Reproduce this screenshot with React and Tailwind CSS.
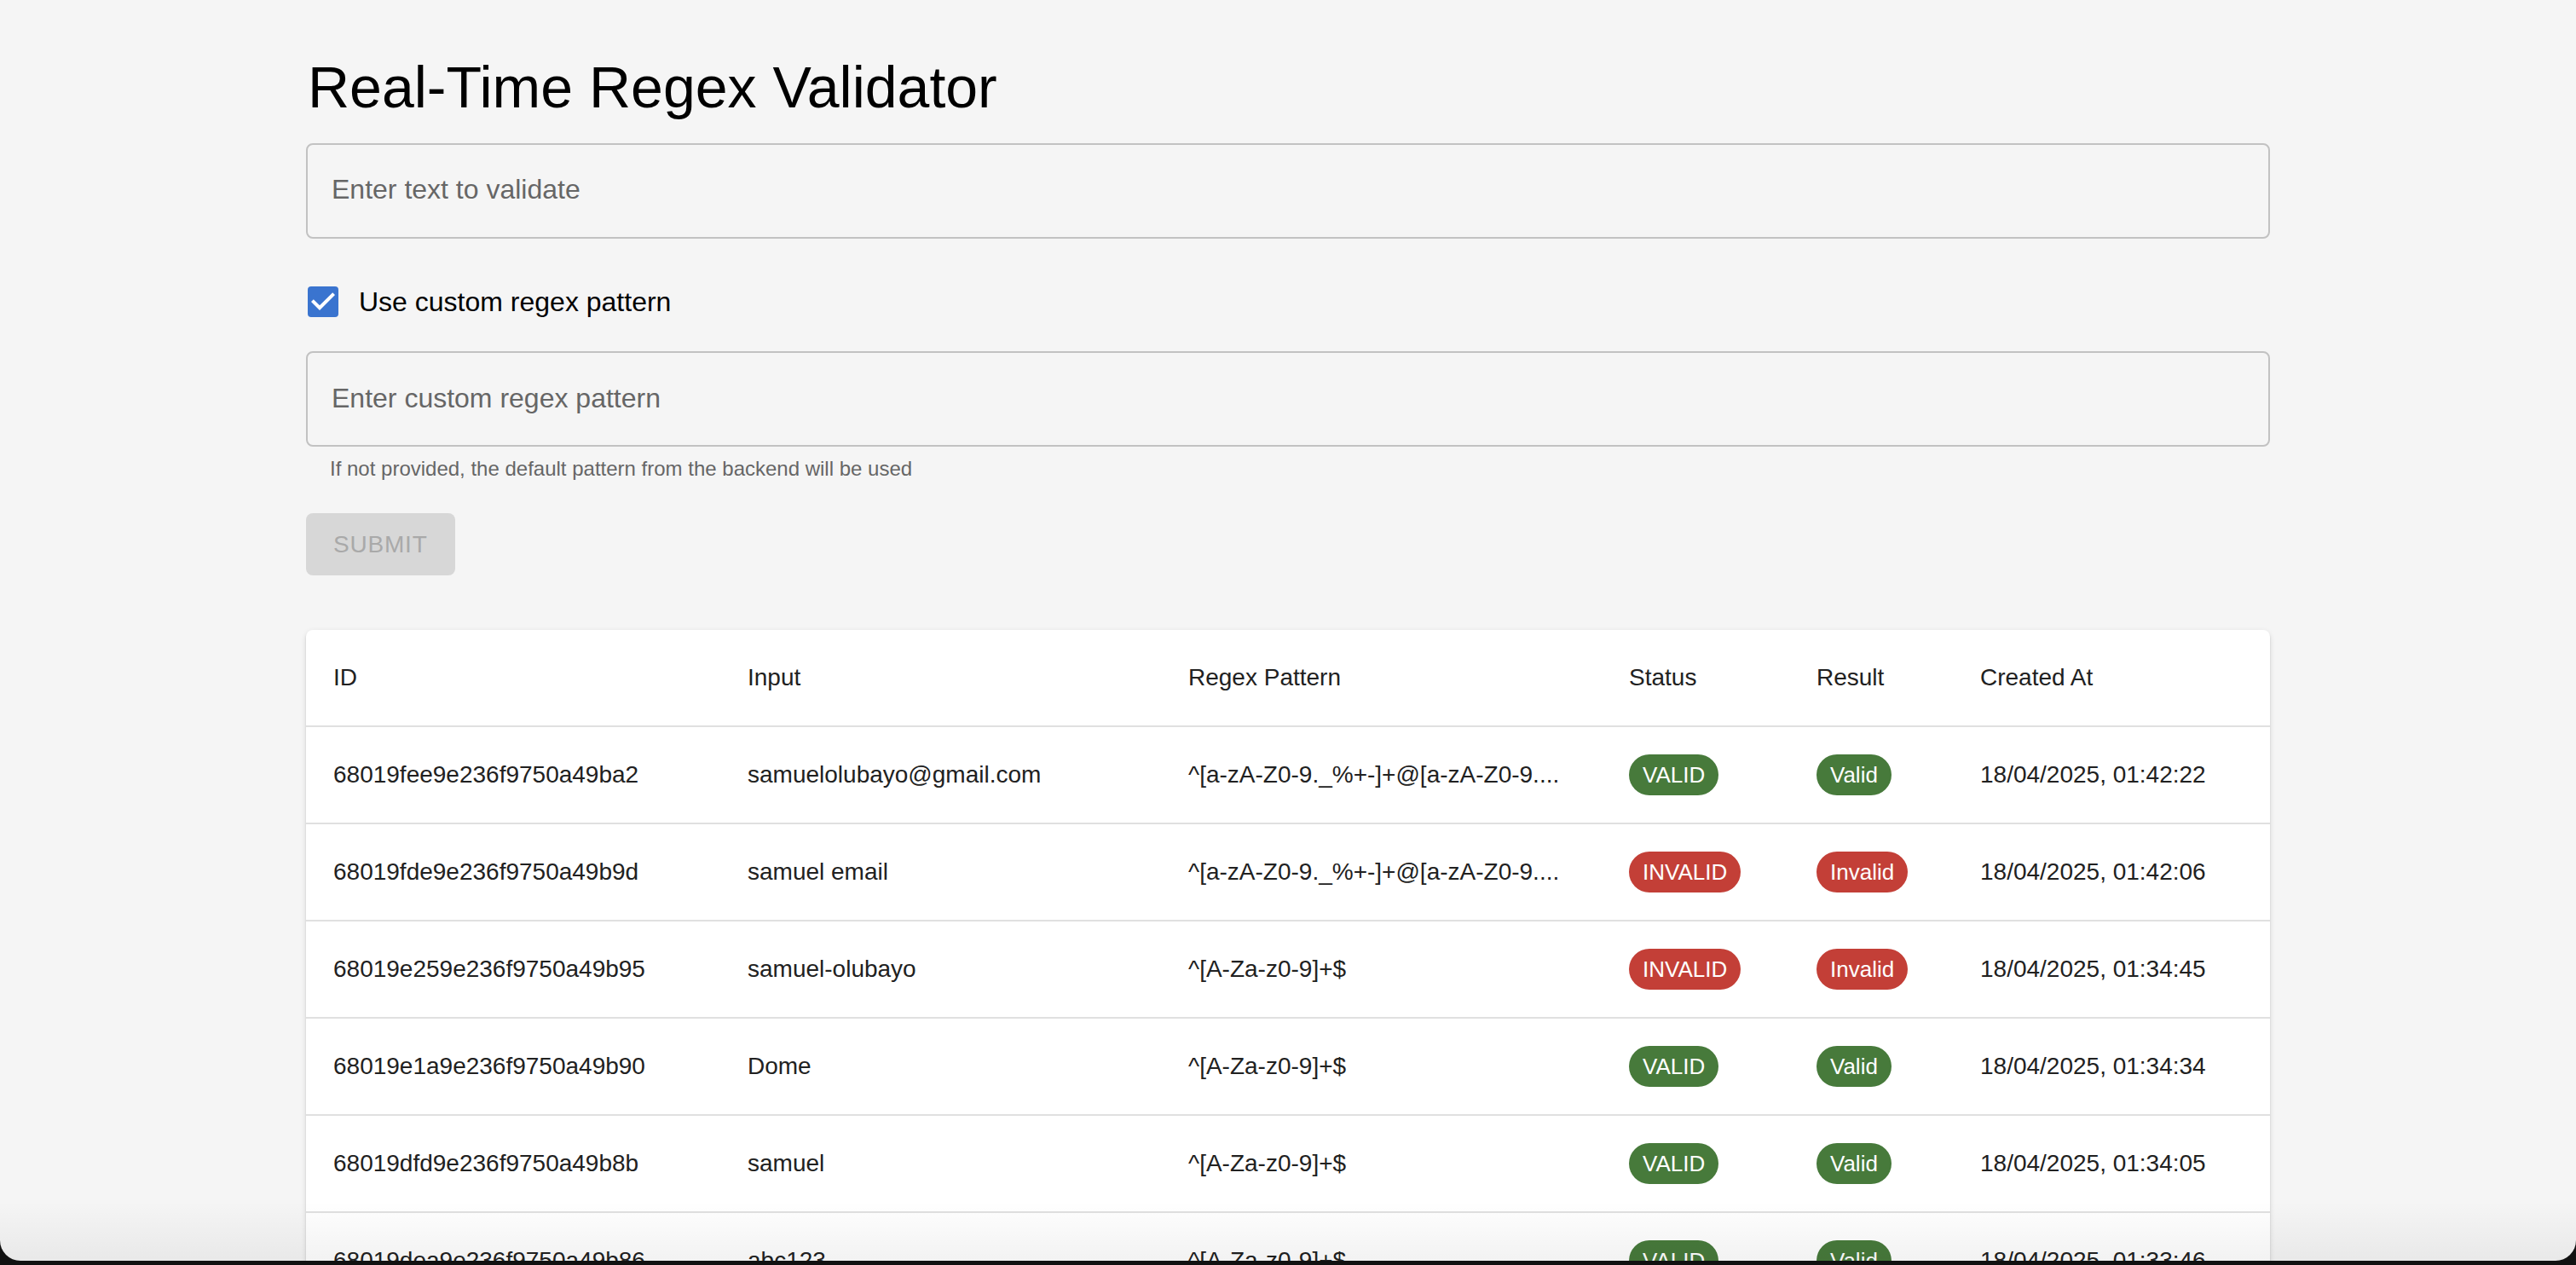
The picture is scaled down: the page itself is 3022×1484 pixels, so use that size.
import React from "react";

const rows = [
  ["68019fee9e236f9750a49ba2", "samuelolubayo@gmail.com", "^[a-zA-Z0-9._%+-]+@[a-zA-Z0-9....", true, "18/04/2025, 01:42:22"],
  ["68019fde9e236f9750a49b9d", "samuel email", "^[a-zA-Z0-9._%+-]+@[a-zA-Z0-9....", false, "18/04/2025, 01:42:06"],
  ["68019e259e236f9750a49b95", "samuel-olubayo", "^[A-Za-z0-9]+$", false, "18/04/2025, 01:34:45"],
  ["68019e1a9e236f9750a49b90", "Dome", "^[A-Za-z0-9]+$", true, "18/04/2025, 01:34:34"],
  ["68019dfd9e236f9750a49b8b", "samuel", "^[A-Za-z0-9]+$", true, "18/04/2025, 01:34:05"],
  ["68019dea9e236f9750a49b86", "abc123", "^[A-Za-z0-9]+$", true, "18/04/2025, 01:33:46"],
];

function Chip({ ok, children }) {
  return (
    <span
      className={
        "inline-flex h-[48px] items-center rounded-full px-[16px] text-[26px] leading-none text-white " +
        (ok ? "bg-[#477a3b]" : "bg-[#c33f37]")
      }
    >
      {children}
    </span>
  );
}

const grid = "grid grid-cols-[486px_517px_517px_220px_192px_372px]";

export default function App() {
  return (
    <div className="w-[3022px] h-[1484px] bg-[#111111] overflow-hidden" style={{ fontFamily: '"Liberation Sans", Arial, sans-serif' }}>
      <div className="relative w-[3022px] h-[1479px] bg-[#f5f5f5] rounded-b-[24px] overflow-hidden">
        <div className="mx-auto w-[2304px] pt-[60px] flex flex-col">
          <h1 className="ml-[2px] text-[68px] leading-[84px] font-normal text-black mb-[24px]">Real-Time Regex Validator</h1>

          <div className="h-[112px] rounded-[8px] border-2 border-[#c2c2c2] flex items-center pl-[28px] pb-[4px]">
            <span className="text-[32px] text-[#666666]">Enter text to validate</span>
          </div>

          <div className="mt-[32px] h-[84px] flex items-center -ml-[22px]">
            <div className="w-[84px] h-[84px] flex items-center justify-center">
              <svg width="48" height="48" viewBox="0 0 24 24">
                <rect x="3" y="3" width="18" height="18" rx="2" fill="#3a74cf" />
                <path d="M10 17l-5-5 1.41-1.41L10 14.17l7.59-7.59L19 8l-9 9z" fill="#ffffff" />
              </svg>
            </div>
            <span className="text-[32px] text-black">Use custom regex pattern</span>
          </div>

          <div className="mt-[16px] h-[112px] rounded-[8px] border-2 border-[#c2c2c2] flex items-center pl-[28px] pb-[2px]">
            <span className="text-[32px] text-[#666666]">Enter custom regex pattern</span>
          </div>
          <p className="mt-[6px] ml-[28px] text-[24px] leading-[40px] text-[#666666]">
            If not provided, the default pattern from the backend will be used
          </p>

          <div className="mt-[32px]">
            <button className="rounded-[8px] bg-[#d7d7d7] px-[32px] py-[12px] text-[28px] leading-[49px] font-medium tracking-[0.8px] uppercase text-[#a9a9a9]">
              Submit
            </button>
          </div>

          <div className="mt-[64px] rounded-[8px] bg-white shadow-[0_4px_2px_-2px_rgba(0,0,0,0.2),0_2px_2px_0_rgba(0,0,0,0.14),0_2px_6px_0_rgba(0,0,0,0.12)] overflow-hidden">
            <div className={grid + " h-[114px] border-b-2 border-[#e0e0e0] text-[28px] text-[#212121]"}>
              {["ID", "Input", "Regex Pattern", "Status", "Result", "Created At"].map((h) => (
                <div key={h} className="px-[32px] flex items-center">{h}</div>
              ))}
            </div>
            {rows.map((r) => (
              <div key={r[0]} className={grid + " h-[114px] border-b-2 border-[#e0e0e0] text-[28px] text-[#212121]"}>
                <div className="px-[32px] flex items-center">{r[0]}</div>
                <div className="px-[32px] flex items-center">{r[1]}</div>
                <div className="px-[32px] flex items-center whitespace-nowrap">{r[2]}</div>
                <div className="px-[32px] flex items-center"><Chip ok={r[3]}>{r[3] ? "VALID" : "INVALID"}</Chip></div>
                <div className="px-[32px] flex items-center"><Chip ok={r[3]}>{r[3] ? "Valid" : "Invalid"}</Chip></div>
                <div className="px-[32px] flex items-center">{r[4]}</div>
              </div>
            ))}
          </div>
        </div>
        <div className="pointer-events-none absolute inset-x-0 bottom-0 h-[70px] bg-linear-to-b from-transparent to-[rgba(0,0,0,0.05)]" />
      </div>
    </div>
  );
}
